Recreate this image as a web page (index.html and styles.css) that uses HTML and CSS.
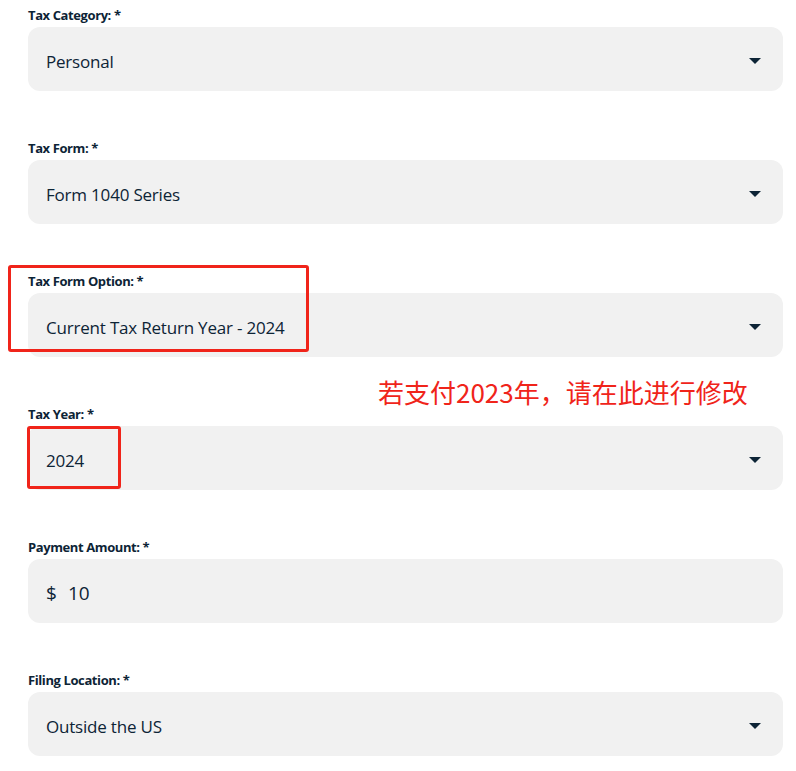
FILE: index.html
```html
<!DOCTYPE html>
<html>
	<head>
		<title>Tax Payment</title>
		<link rel="stylesheet" href="styles.css">
	</head>
	<body>
		<div class="form">
			<div class="field">
				<div class="label">Tax Category: *</div>
				<div class="select"><span>Personal</span><span class="arrow"></span></div>
			</div>
			<div class="field">
				<div class="label">Tax Form: *</div>
				<div class="select"><span>Form 1040 Series</span><span class="arrow"></span></div>
			</div>
			<div class="field">
				<div class="label">Tax Form Option: *</div>
				<div class="select"><span>Current Tax Return Year - 2024</span><span class="arrow"></span></div>
				<div class="mark mark-option"></div>
				<div class="note">若支付2023年，请在此进行修改</div>
			</div>
			<div class="field">
				<div class="label">Tax Year: *</div>
				<div class="select"><span>2024</span><span class="arrow"></span></div>
				<div class="mark mark-year"></div>
			</div>
			<div class="field">
				<div class="label">Payment Amount: *</div>
				<div class="select amount"><span class="dollar">$</span><span>10</span></div>
			</div>
			<div class="field">
				<div class="label">Filing Location: *</div>
				<div class="select"><span>Outside the US</span><span class="arrow"></span></div>
			</div>
		</div>
	</body>
</html>
```

FILE: styles.css
```css
body{
	margin: 0;
	background: #ffffff;
	font-family: "Source Sans Pro", "Open Sans", "Liberation Sans", sans-serif;
	color: #0d2436;
}
.form{
	padding: 7px 13px 0 28px;
	display: flex;
	flex-direction: column;
	gap: 49px;
}
.field{
	position: relative;
}
.label{
	font-size: 13px;
	font-weight: bold;
	line-height: 16px;
	margin-bottom: 4px;
	letter-spacing: -0.4px;
}
.select{
	height: 64px;
	background: #f1f1f1;
	border-radius: 12px;
	display: flex;
	align-items: center;
	padding: 4px 22px 0 18px;
	box-sizing: border-box;
	font-size: 17px;
	letter-spacing: -0.2px;
}
.select span:first-child{
	flex: 1;
}
.amount{
	font-size: 19px;
}
.amount .dollar{
	flex: none !important;
	width: 22px;
}
.arrow{
	width: 0;
	height: 0;
	border-left: 6px solid transparent;
	border-right: 6px solid transparent;
	border-top: 6px solid #0d2436;
	margin-top: -1px;
}
.mark{
	position: absolute;
	border: 3px solid #f0241a;
	border-radius: 3px;
}
.mark-option{
	left: -20px;
	top: -8px;
	width: 295px;
	height: 81px;
}
.mark-year{
	left: -1px;
	top: 20px;
	width: 88px;
	height: 57px;
}
.note{
	position: absolute;
	left: 350px;
	top: 103px;
	font-family: "Noto Sans CJK SC", sans-serif;
	font-size: 26px;
	line-height: 32px;
	color: #f0241a;
}
```
